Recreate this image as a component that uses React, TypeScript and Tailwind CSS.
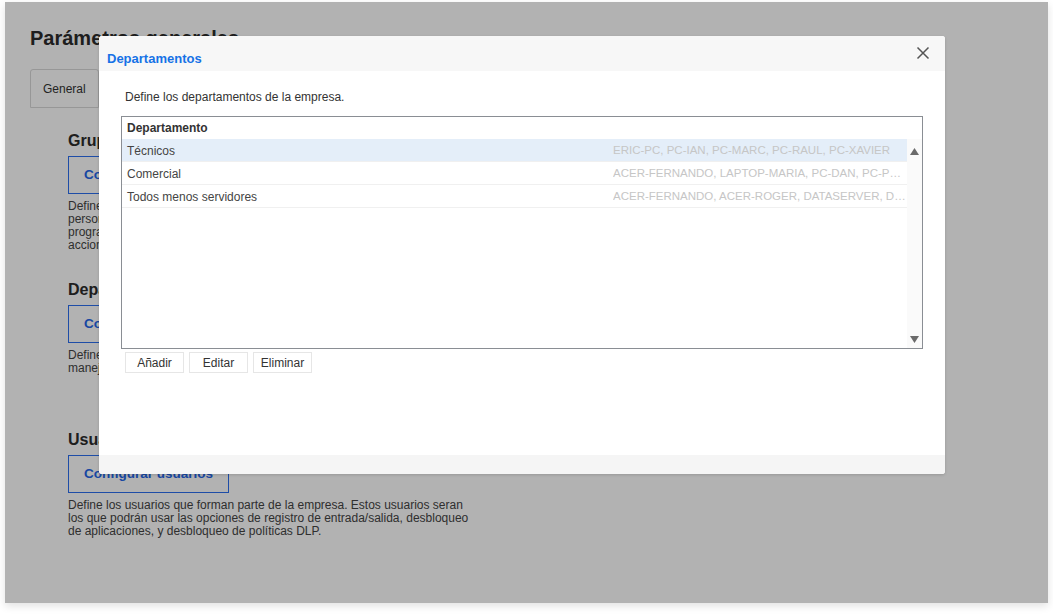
import React from 'react';

const font = { fontFamily: '"Liberation Sans", Arial, sans-serif' };

interface Dept {
  name: string;
  devices: string;
}

const depts: Dept[] = [
  { name: 'Técnicos', devices: 'ERIC-PC, PC-IAN, PC-MARC, PC-RAUL, PC-XAVIER' },
  { name: 'Comercial', devices: 'ACER-FERNANDO, LAPTOP-MARIA, PC-DAN, PC-PEDRO, PC-SARA' },
  { name: 'Todos menos servidores', devices: 'ACER-FERNANDO, ACER-ROGER, DATASERVER, DESKTOP-01, PC-IAN' },
];

/**
 * Section - settings block behind the dialog
 */
function Section({ title, button, lines }: { title: string; button: string; lines: string[] }) {
  return (
    <div className="flex flex-col items-start">
      <h2 className="text-[16px] font-bold text-[#2b2b2b] leading-[20px]">{title}</h2>
      <button
        type="button"
        className="mt-[5px] h-[38px] px-[15px] border border-[#2b6ff0] text-[#2466e8] text-[13.5px] font-bold"
      >
        {button}
      </button>
      <div className="mt-[6px] text-[12px] leading-[13px] text-[#444]">
        {lines.map((l, i) => (
          <div key={i}>{l}</div>
        ))}
      </div>
    </div>
  );
}

/**
 * DeptDialog - modal with departments table
 */
function DeptDialog() {
  return (
    <div className="absolute left-[94px] top-[34px] w-[846px] h-[438px] flex flex-col bg-white rounded-[3px] shadow-[0_1px_3px_rgba(0,0,0,0.15)] overflow-hidden">
      <div className="h-[35px] flex items-start justify-between bg-[#f7f7f7] pl-[8px] pr-[15px]">
        <span className="mt-[15px] text-[13px] font-bold text-[#1672e6] leading-[16px]">Departamentos</span>
        <button type="button" className="mt-[10px] text-[#555]" aria-label="Cerrar">
          <svg width="14" height="14" viewBox="0 0 14 14" stroke="currentColor" strokeWidth="1.5" fill="none">
            <path d="M1.5 1.5l11 11M12.5 1.5l-11 11" />
          </svg>
        </button>
      </div>

      <div className="flex-1 flex flex-col pl-[22px] pr-[22px]">
        <p className="mt-[19px] pl-[4px] text-[12px] leading-[15px] text-[#333]">
          Define los departamentos de la empresa.
        </p>

        <div className="mt-[11px] h-[233px] border border-[#8a8e94] flex">
          <div className="flex-1 flex flex-col">
            <div className="h-[22px] flex items-center px-[5px] text-[12px] font-bold text-[#333]">Departamento</div>
            {depts.map((d, i) => (
              <div
                key={d.name}
                className={
                  i === 0
                    ? 'h-[23px] flex items-center pl-[5px] pr-[1px] pt-[1px] bg-[#e4eef9] border-b border-[#f0f0f0] text-[12px]'
                    : 'h-[23px] flex items-center pl-[5px] pr-[1px] pt-[1px] border-b border-[#f0f0f0] text-[12px]'
                }
              >
                <span className="flex-1 text-[#444]">{d.name}</span>
                <span className="w-[293px] truncate text-[11.5px] text-[#c6c6c6]">{d.devices}</span>
              </div>
            ))}
          </div>
          <div className="w-[15px] mt-[22px] bg-[#fafafa] flex flex-col items-center justify-between pt-[9px] pb-[5px]">
            <svg width="9" height="7" viewBox="0 0 9 7">
              <path d="M4.5 0L9 7H0z" fill="#6b6b6b" />
            </svg>
            <svg width="9" height="7" viewBox="0 0 9 7">
              <path d="M0 0h9L4.5 7z" fill="#6b6b6b" />
            </svg>
          </div>
        </div>

        <div className="mt-[3px] pl-[4px] flex gap-[5px]">
          {['Añadir', 'Editar', 'Eliminar'].map((b) => (
            <button
              key={b}
              type="button"
              className="w-[59px] h-[21px] border border-[#e6e6e6] text-[12px] text-[#333] bg-white"
            >
              {b}
            </button>
          ))}
        </div>
      </div>

      <div className="h-[19px] bg-[#f5f5f5]" />
    </div>
  );
}

export default function App() {
  return (
    <div className="w-[1053px] h-[615px] bg-white pt-[2px] pl-[5px] pr-[5px] pb-[12px]" style={font}>
      <div className="relative w-full h-full bg-white overflow-hidden shadow-[0_3px_8px_rgba(0,0,0,0.12)]">
        {/* page behind the dialog */}
        <div className="pl-[25px] pt-[24px]">
          <h1 className="text-[20px] font-bold text-[#2b2b2b] leading-[24px]">Parámetros generales</h1>
          <div className="mt-[19px] flex">
            <div className="h-[39px] px-[12px] flex items-center border border-[#d8d8d8] rounded-t-[3px] text-[12px] text-[#333]">
              General
            </div>
            <div className="h-[39px] px-[12px] flex items-center border border-[#d8d8d8] text-[12px] text-[#333]">
              Avanzado
            </div>
          </div>
          <div className="mt-[23px] pl-[38px] flex flex-col gap-[28px]">
            <Section
              title="Grupos de usuarios"
              button="Configurar grupos"
              lines={[
                'Define los grupos de usuarios de la empresa, con los',
                'personas que podrán realizar las acciones que se',
                'programen, y las que no podrán realizar las',
                'acciones de bloqueo.',
              ]}
            />
            <Section
              title="Departamentos"
              button="Configurar departamentos"
              lines={[
                'Define los departamentos de la empresa, para',
                'manejar los equipos de forma conjunta.',
              ]}
            />
            <div className="mt-[27px]">
              <Section
                title="Usuarios"
                button="Configurar usuarios"
                lines={[
                  'Define los usuarios que forman parte de la empresa. Estos usuarios seran',
                  'los que podrán usar las opciones de registro de entrada/salida, desbloqueo',
                  'de aplicaciones, y desbloqueo de políticas DLP.',
                ]}
              />
            </div>
          </div>
        </div>

        {/* overlay */}
        <div className="absolute inset-0 bg-black/30" />

        <DeptDialog />
      </div>
    </div>
  );
}
